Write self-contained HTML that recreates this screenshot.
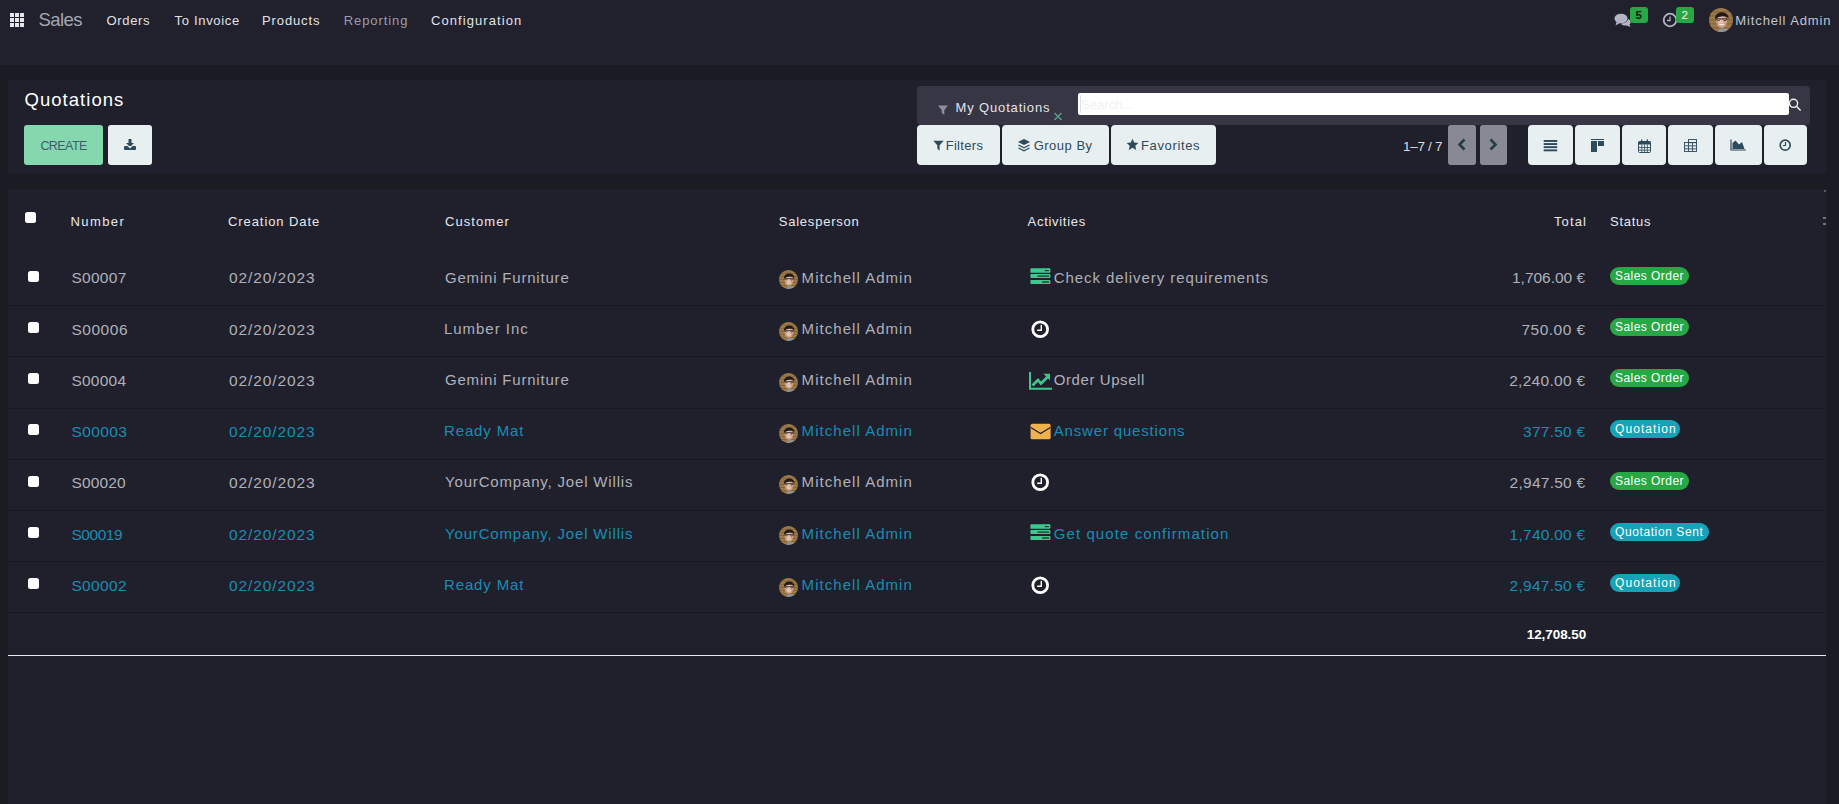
<!DOCTYPE html>
<html><head><meta charset="utf-8"><title>Quotations</title>
<style>
html,body{margin:0;padding:0;}
body{width:1839px;height:804px;overflow:hidden;background:#1b1b24;position:relative;font-family:"Liberation Sans",sans-serif;}
.b{position:absolute;display:block;}
.t{position:absolute;white-space:pre;line-height:normal;font-family:"Liberation Sans",sans-serif;}
</style></head><body>
<div class="b" style="left:0px;top:0px;width:1839px;height:65px;background:#21212d;border-radius:0px;"></div>
<svg class="b" style="left:10px;top:13px" width="14" height="14" viewBox="0 0 14 14"><rect x="0" y="0" width="4" height="4" fill="#e6e6ea"/><rect x="5" y="0" width="4" height="4" fill="#e6e6ea"/><rect x="10" y="0" width="4" height="4" fill="#e6e6ea"/><rect x="0" y="5" width="4" height="4" fill="#e6e6ea"/><rect x="5" y="5" width="4" height="4" fill="#e6e6ea"/><rect x="10" y="5" width="4" height="4" fill="#e6e6ea"/><rect x="0" y="10" width="4" height="4" fill="#e6e6ea"/><rect x="5" y="10" width="4" height="4" fill="#e6e6ea"/><rect x="10" y="10" width="4" height="4" fill="#e6e6ea"/></svg>
<svg class="b" style="left:1614px;top:13px" width="18" height="15" viewBox="0 0 18 15"><ellipse cx="7" cy="5.5" rx="6.5" ry="4.8" fill="#b3b5c3"/><path d="M2.5 9 L1.5 12.5 L6 10 Z" fill="#b3b5c3"/><path d="M14 6 C17 7 17.5 10 15.5 11.5 L16.5 14 L12.5 12.5 C10 12.8 7.5 12 6.5 10.5 C10 10.5 13.5 9 14 6 Z" fill="#b3b5c3"/></svg>
<div class="b" style="left:1630px;top:7px;width:18px;height:16px;background:#28a745;border-radius:3px;"></div>
<span class="t" style="left:1635.5px;top:8.5px;font-size:11.5px;color:#0c160e;font-weight:700">5</span>
<svg class="b" style="left:1662px;top:12px" width="16" height="16" viewBox="0 0 16 16"><circle cx="8" cy="8" r="6.3" fill="none" stroke="#b3b5c3" stroke-width="1.8"/><path d="M8 4.5 V8.5 H5" fill="none" stroke="#b3b5c3" stroke-width="1.3"/></svg>
<div class="b" style="left:1676px;top:7px;width:18px;height:16px;background:#28a745;border-radius:3px;"></div>
<span class="t" style="left:1681.5px;top:8.5px;font-size:11.5px;color:#f4f4e0">2</span>
<svg class="b" style="left:1709px;top:8px" width="24" height="24" viewBox="0 0 24 24"><defs><clipPath id="c1709_8"><circle cx="12" cy="12" r="12"/></clipPath></defs><g clip-path="url(#c1709_8)" transform="scale(1.0)"><rect width="24" height="24" fill="#9d7b49"/><rect x="0" y="3.5" width="24" height="0.8" fill="#5e4526" opacity="0.6"/><rect x="0" y="7.5" width="24" height="0.8" fill="#5e4526" opacity="0.6"/><rect x="0" y="11.5" width="24" height="0.8" fill="#5e4526" opacity="0.6"/><rect x="0" y="15.5" width="24" height="0.8" fill="#5e4526" opacity="0.6"/><rect x="0" y="19.5" width="24" height="0.8" fill="#5e4526" opacity="0.6"/><path d="M8 26 C9 21 12 20.5 15 20.5 C18 20.5 20 21 21 26 Z" fill="#8c969e"/><ellipse cx="12.6" cy="13" rx="5.4" ry="7" fill="#cf9f88"/><ellipse cx="12" cy="11.5" rx="3" ry="4.2" fill="#e8cbbd" opacity="0.75"/><path d="M6.2 11.5 C5 2.5 20 1.5 19.6 11 C18.8 9 16.5 8.2 13 8.4 C9.8 8.6 7.6 9.5 6.2 11.5 Z" fill="#231b18"/><path d="M7.2 10.8 H18.2 M7.5 10.8 C7.8 13 10.5 13 11.6 11 M13.4 11 C14.5 13 17.5 13 17.9 10.8" stroke="#2e2420" stroke-width="0.9" fill="none"/><path d="M10.2 16 Q12.6 17.6 15 16" stroke="#f4f0ee" stroke-width="1.1" fill="none"/></g></svg>
<div class="b" style="left:8px;top:80px;width:1818px;height:93px;background:#20202c;border-radius:0px;"></div>
<div class="b" style="left:24px;top:125px;width:79px;height:40px;background:#85d8ad;border-radius:3px;"></div>
<div class="b" style="left:108px;top:125px;width:44px;height:40px;background:#e8eff1;border-radius:3px;"></div>
<svg class="b" style="left:123px;top:138px" width="14" height="13" viewBox="0 0 14 13"><path d="M5.5 1 H8.5 V5 H11 L7 9 L3 5 H5.5 Z" fill="#2d4b5b"/><rect x="1" y="8" width="12" height="4" rx="1" fill="#2d4b5b"/><path d="M4.5 8 L7 10.5 L9.5 8" fill="#e8eff1"/></svg>
<div class="b" style="left:917px;top:86px;width:893px;height:39px;background:#363644;border-radius:4px;"></div>
<svg class="b" style="left:937px;top:104px" width="12" height="12" viewBox="0 0 12 12"><path d="M1 1.5 H11 L7.3 6 V11 L4.7 8.8 V6 Z" fill="#8e909d"/></svg>
<svg class="b" style="left:1053px;top:112px" width="10" height="9" viewBox="0 0 10 9"><path d="M1.5 1 L8.5 8 M8.5 1 L1.5 8" stroke="#5c9b88" stroke-width="1.5"/></svg>
<div class="b" style="left:1078px;top:93px;width:711px;height:22px;background:#ffffff;border-radius:2px;"></div>
<div class="b" style="left:1080px;top:95px;width:1px;height:18px;background:#d9e2e7;border-radius:0px;"></div>
<svg class="b" style="left:1788px;top:97px" width="14" height="15" viewBox="0 0 14 15"><circle cx="5.5" cy="6.3" r="4.1" fill="none" stroke="#f2f2f4" stroke-width="1.4"/><path d="M8.4 9.3 L12.6 13.5" stroke="#f2f2f4" stroke-width="1.5"/></svg>
<div class="b" style="left:917px;top:125px;width:83px;height:40px;background:#e8eff1;border-radius:4px;"></div>
<div class="b" style="left:1002px;top:125px;width:107px;height:40px;background:#e8eff1;border-radius:4px;"></div>
<div class="b" style="left:1111px;top:125px;width:105px;height:40px;background:#e8eff1;border-radius:4px;"></div>
<svg class="b" style="left:933px;top:140px" width="11" height="11" viewBox="0 0 11 11"><path d="M0.3 0.7 H10.7 L6.6 5.3 V10.8 L4.3 8.5 V5.3 Z" fill="#2d4b5b"/></svg>
<svg class="b" style="left:1017px;top:138px" width="14" height="14" viewBox="0 0 14 14"><path d="M7 1 L13 4 L7 7 L1 4 Z" fill="#2d4b5b"/><path d="M1.5 7 L7 9.8 L12.5 7" fill="none" stroke="#2d4b5b" stroke-width="1.4"/><path d="M1.5 10 L7 12.8 L12.5 10" fill="none" stroke="#2d4b5b" stroke-width="1.4"/></svg>
<svg class="b" style="left:1126px;top:138px" width="13" height="13" viewBox="0 0 13 13"><path d="M6.5 0.8 L8.2 4.6 L12.4 5 L9.3 7.8 L10.2 12 L6.5 9.8 L2.8 12 L3.7 7.8 L0.6 5 L4.8 4.6 Z" fill="#2d4b5b"/></svg>
<div class="b" style="left:1448px;top:125px;width:28px;height:40px;background:#878a94;border-radius:3px;"></div>
<div class="b" style="left:1480px;top:125px;width:27px;height:40px;background:#878a94;border-radius:3px;"></div>
<svg class="b" style="left:1457px;top:138px" width="10" height="14" viewBox="0 0 10 14"><path d="M7.5 1.5 L2.5 6.5 L7.5 11.5" fill="none" stroke="#263b48" stroke-width="2.6"/></svg>
<svg class="b" style="left:1488px;top:138px" width="10" height="14" viewBox="0 0 10 14"><path d="M2.5 1.5 L7.5 6.5 L2.5 11.5" fill="none" stroke="#263b48" stroke-width="2.6"/></svg>
<div class="b" style="left:1528px;top:125px;width:45px;height:40px;background:#e8eff1;border-radius:4px;"></div>
<div class="b" style="left:1575px;top:125px;width:45px;height:40px;background:#e8eff1;border-radius:4px;"></div>
<div class="b" style="left:1622px;top:125px;width:44px;height:40px;background:#e8eff1;border-radius:4px;"></div>
<div class="b" style="left:1668px;top:125px;width:45px;height:40px;background:#e8eff1;border-radius:4px;"></div>
<div class="b" style="left:1715px;top:125px;width:47px;height:40px;background:#e8eff1;border-radius:4px;"></div>
<div class="b" style="left:1764px;top:125px;width:43px;height:40px;background:#e8eff1;border-radius:4px;"></div>
<svg class="b" style="left:1543px;top:139px" width="15" height="14" viewBox="0 0 15 14"><rect x="0.7" y="1" width="13.5" height="1.9" fill="#2d4b5b"/><rect x="0.7" y="4.1" width="13.5" height="1.9" fill="#2d4b5b"/><rect x="0.7" y="7.2" width="13.5" height="1.9" fill="#2d4b5b"/><rect x="0.7" y="10.4" width="13.5" height="1.9" fill="#2d4b5b"/></svg>
<svg class="b" style="left:1590px;top:138px" width="15" height="15" viewBox="0 0 15 15"><rect x="1" y="1" width="13" height="1" fill="#2d4b5b"/><rect x="1" y="3" width="6" height="11" fill="#2d4b5b"/><rect x="8" y="3" width="6" height="5" fill="#2d4b5b"/></svg>
<svg class="b" style="left:1637.5px;top:138.5px" width="13" height="14" viewBox="0 0 13 14"><rect x="0.5" y="2.5" width="12" height="11" rx="1" fill="none" stroke="#2d4b5b" stroke-width="1"/><rect x="0.5" y="2.5" width="12" height="3" fill="#2d4b5b"/><rect x="3" y="0.5" width="1.3" height="3" fill="#2d4b5b"/><rect x="8.7" y="0.5" width="1.3" height="3" fill="#2d4b5b"/><rect x="3.4" y="5.5" width="0.8" height="8" fill="#2d4b5b"/><rect x="6.1" y="5.5" width="0.8" height="8" fill="#2d4b5b"/><rect x="8.9" y="5.5" width="0.8" height="8" fill="#2d4b5b"/><rect x="0.5" y="8" width="12" height="0.8" fill="#2d4b5b"/><rect x="0.5" y="10.7" width="12" height="0.8" fill="#2d4b5b"/></svg>
<svg class="b" style="left:1684px;top:139px" width="13" height="13" viewBox="0 0 13 13"><rect x="0.5" y="3.5" width="12" height="9" fill="none" stroke="#2d4b5b" stroke-width="0.9"/><rect x="4.5" y="0.5" width="8" height="3.2" fill="none" stroke="#2d4b5b" stroke-width="0.9"/><rect x="4.1" y="3.5" width="0.9" height="9" fill="#2d4b5b"/><rect x="8.1" y="3.5" width="0.9" height="9" fill="#2d4b5b"/><rect x="0.5" y="6.4" width="12" height="0.9" fill="#2d4b5b"/><rect x="0.5" y="9.4" width="12" height="0.9" fill="#2d4b5b"/></svg>
<svg class="b" style="left:1730px;top:139px" width="17" height="12" viewBox="0 0 17 12"><path d="M1 0.5 V11 H16" fill="none" stroke="#2d4b5b" stroke-width="1.2"/><path d="M2.5 10 V4 L5.5 1.5 L9 5.5 L12 3 L14.5 10 Z" fill="#2d4b5b"/></svg>
<svg class="b" style="left:1779px;top:139px" width="13" height="13" viewBox="0 0 13 13"><circle cx="6.2" cy="6.2" r="5" fill="none" stroke="#2d4b5b" stroke-width="1.7"/><path d="M6.5 3 V6.5 H4" fill="none" stroke="#2d4b5b" stroke-width="1.2"/></svg>
<div class="b" style="left:8px;top:189px;width:1818px;height:615px;background:#20202c;border-radius:0px;"></div>
<div class="b" style="left:25px;top:212px;width:11px;height:11px;background:#ffffff;border-radius:2.5px;"></div>
<div class="b" style="left:8px;top:305px;width:1818px;height:1px;background:#191921;border-radius:0px;"></div>
<div class="b" style="left:8px;top:356px;width:1818px;height:1px;background:#191921;border-radius:0px;"></div>
<div class="b" style="left:8px;top:408px;width:1818px;height:1px;background:#191921;border-radius:0px;"></div>
<div class="b" style="left:8px;top:459px;width:1818px;height:1px;background:#191921;border-radius:0px;"></div>
<div class="b" style="left:8px;top:510px;width:1818px;height:1px;background:#191921;border-radius:0px;"></div>
<div class="b" style="left:8px;top:561px;width:1818px;height:1px;background:#191921;border-radius:0px;"></div>
<div class="b" style="left:8px;top:612px;width:1818px;height:1px;background:#191921;border-radius:0px;"></div>
<div class="b" style="left:28px;top:271px;width:11px;height:11px;background:#ffffff;border-radius:2.5px;"></div>
<div class="b" style="left:28px;top:322px;width:11px;height:11px;background:#ffffff;border-radius:2.5px;"></div>
<div class="b" style="left:28px;top:373px;width:11px;height:11px;background:#ffffff;border-radius:2.5px;"></div>
<div class="b" style="left:28px;top:424px;width:11px;height:11px;background:#ffffff;border-radius:2.5px;"></div>
<div class="b" style="left:28px;top:476px;width:11px;height:11px;background:#ffffff;border-radius:2.5px;"></div>
<div class="b" style="left:28px;top:527px;width:11px;height:11px;background:#ffffff;border-radius:2.5px;"></div>
<div class="b" style="left:28px;top:578px;width:11px;height:11px;background:#ffffff;border-radius:2.5px;"></div>
<svg class="b" style="left:779px;top:270px" width="19" height="19" viewBox="0 0 19 19"><defs><clipPath id="c779_270"><circle cx="12" cy="12" r="12"/></clipPath></defs><g clip-path="url(#c779_270)" transform="scale(0.7916666666666666)"><rect width="24" height="24" fill="#9d7b49"/><rect x="0" y="3.5" width="24" height="0.8" fill="#5e4526" opacity="0.6"/><rect x="0" y="7.5" width="24" height="0.8" fill="#5e4526" opacity="0.6"/><rect x="0" y="11.5" width="24" height="0.8" fill="#5e4526" opacity="0.6"/><rect x="0" y="15.5" width="24" height="0.8" fill="#5e4526" opacity="0.6"/><rect x="0" y="19.5" width="24" height="0.8" fill="#5e4526" opacity="0.6"/><path d="M8 26 C9 21 12 20.5 15 20.5 C18 20.5 20 21 21 26 Z" fill="#8c969e"/><ellipse cx="12.6" cy="13" rx="5.4" ry="7" fill="#cf9f88"/><ellipse cx="12" cy="11.5" rx="3" ry="4.2" fill="#e8cbbd" opacity="0.75"/><path d="M6.2 11.5 C5 2.5 20 1.5 19.6 11 C18.8 9 16.5 8.2 13 8.4 C9.8 8.6 7.6 9.5 6.2 11.5 Z" fill="#231b18"/><path d="M7.2 10.8 H18.2 M7.5 10.8 C7.8 13 10.5 13 11.6 11 M13.4 11 C14.5 13 17.5 13 17.9 10.8" stroke="#2e2420" stroke-width="0.9" fill="none"/><path d="M10.2 16 Q12.6 17.6 15 16" stroke="#f4f0ee" stroke-width="1.1" fill="none"/></g></svg>
<svg class="b" style="left:1030px;top:268px" width="21" height="17" viewBox="0 0 21 17"><rect x="0.4" y="0.2" width="20" height="4.6" rx="0.8" fill="#3ec88f"/><rect x="0.4" y="6.1" width="20" height="3.9" rx="0.8" fill="#3ec88f"/><rect x="0.4" y="11.9" width="20" height="4.2" rx="0.8" fill="#3ec88f"/><rect x="14.8" y="2" width="4" height="1.2" fill="#1a2a24"/><rect x="7.5" y="7.5" width="11.5" height="1.2" fill="#1a2a24"/><rect x="12" y="13.4" width="7" height="1.2" fill="#1a2a24"/></svg>
<div class="b" style="left:1610px;top:267px;width:79px;height:18px;background:#28a745;border-radius:9px;"></div>
<svg class="b" style="left:779px;top:322px" width="19" height="19" viewBox="0 0 19 19"><defs><clipPath id="c779_322"><circle cx="12" cy="12" r="12"/></clipPath></defs><g clip-path="url(#c779_322)" transform="scale(0.7916666666666666)"><rect width="24" height="24" fill="#9d7b49"/><rect x="0" y="3.5" width="24" height="0.8" fill="#5e4526" opacity="0.6"/><rect x="0" y="7.5" width="24" height="0.8" fill="#5e4526" opacity="0.6"/><rect x="0" y="11.5" width="24" height="0.8" fill="#5e4526" opacity="0.6"/><rect x="0" y="15.5" width="24" height="0.8" fill="#5e4526" opacity="0.6"/><rect x="0" y="19.5" width="24" height="0.8" fill="#5e4526" opacity="0.6"/><path d="M8 26 C9 21 12 20.5 15 20.5 C18 20.5 20 21 21 26 Z" fill="#8c969e"/><ellipse cx="12.6" cy="13" rx="5.4" ry="7" fill="#cf9f88"/><ellipse cx="12" cy="11.5" rx="3" ry="4.2" fill="#e8cbbd" opacity="0.75"/><path d="M6.2 11.5 C5 2.5 20 1.5 19.6 11 C18.8 9 16.5 8.2 13 8.4 C9.8 8.6 7.6 9.5 6.2 11.5 Z" fill="#231b18"/><path d="M7.2 10.8 H18.2 M7.5 10.8 C7.8 13 10.5 13 11.6 11 M13.4 11 C14.5 13 17.5 13 17.9 10.8" stroke="#2e2420" stroke-width="0.9" fill="none"/><path d="M10.2 16 Q12.6 17.6 15 16" stroke="#f4f0ee" stroke-width="1.1" fill="none"/></g></svg>
<svg class="b" style="left:1031px;top:320px" width="19" height="19" viewBox="0 0 19 19"><circle cx="9.2" cy="9.2" r="7.4" fill="none" stroke="#ffffff" stroke-width="2.8"/><path d="M10.3 4.8 V10.3 H6.2" fill="none" stroke="#ffffff" stroke-width="1.4"/></svg>
<div class="b" style="left:1610px;top:318px;width:79px;height:18px;background:#28a745;border-radius:9px;"></div>
<svg class="b" style="left:779px;top:373px" width="19" height="19" viewBox="0 0 19 19"><defs><clipPath id="c779_373"><circle cx="12" cy="12" r="12"/></clipPath></defs><g clip-path="url(#c779_373)" transform="scale(0.7916666666666666)"><rect width="24" height="24" fill="#9d7b49"/><rect x="0" y="3.5" width="24" height="0.8" fill="#5e4526" opacity="0.6"/><rect x="0" y="7.5" width="24" height="0.8" fill="#5e4526" opacity="0.6"/><rect x="0" y="11.5" width="24" height="0.8" fill="#5e4526" opacity="0.6"/><rect x="0" y="15.5" width="24" height="0.8" fill="#5e4526" opacity="0.6"/><rect x="0" y="19.5" width="24" height="0.8" fill="#5e4526" opacity="0.6"/><path d="M8 26 C9 21 12 20.5 15 20.5 C18 20.5 20 21 21 26 Z" fill="#8c969e"/><ellipse cx="12.6" cy="13" rx="5.4" ry="7" fill="#cf9f88"/><ellipse cx="12" cy="11.5" rx="3" ry="4.2" fill="#e8cbbd" opacity="0.75"/><path d="M6.2 11.5 C5 2.5 20 1.5 19.6 11 C18.8 9 16.5 8.2 13 8.4 C9.8 8.6 7.6 9.5 6.2 11.5 Z" fill="#231b18"/><path d="M7.2 10.8 H18.2 M7.5 10.8 C7.8 13 10.5 13 11.6 11 M13.4 11 C14.5 13 17.5 13 17.9 10.8" stroke="#2e2420" stroke-width="0.9" fill="none"/><path d="M10.2 16 Q12.6 17.6 15 16" stroke="#f4f0ee" stroke-width="1.1" fill="none"/></g></svg>
<svg class="b" style="left:1028px;top:371px" width="25" height="19" viewBox="0 0 25 19"><path d="M2 1 V17.7 H24" fill="none" stroke="#3ec88f" stroke-width="2"/><path d="M4.5 14.5 L10 9 L13 12.5 L19.5 6" fill="none" stroke="#3ec88f" stroke-width="2.6"/><path d="M15.5 2.8 H22 V9.3 Z" fill="#3ec88f"/></svg>
<div class="b" style="left:1610px;top:369px;width:79px;height:18px;background:#28a745;border-radius:9px;"></div>
<svg class="b" style="left:779px;top:424px" width="19" height="19" viewBox="0 0 19 19"><defs><clipPath id="c779_424"><circle cx="12" cy="12" r="12"/></clipPath></defs><g clip-path="url(#c779_424)" transform="scale(0.7916666666666666)"><rect width="24" height="24" fill="#9d7b49"/><rect x="0" y="3.5" width="24" height="0.8" fill="#5e4526" opacity="0.6"/><rect x="0" y="7.5" width="24" height="0.8" fill="#5e4526" opacity="0.6"/><rect x="0" y="11.5" width="24" height="0.8" fill="#5e4526" opacity="0.6"/><rect x="0" y="15.5" width="24" height="0.8" fill="#5e4526" opacity="0.6"/><rect x="0" y="19.5" width="24" height="0.8" fill="#5e4526" opacity="0.6"/><path d="M8 26 C9 21 12 20.5 15 20.5 C18 20.5 20 21 21 26 Z" fill="#8c969e"/><ellipse cx="12.6" cy="13" rx="5.4" ry="7" fill="#cf9f88"/><ellipse cx="12" cy="11.5" rx="3" ry="4.2" fill="#e8cbbd" opacity="0.75"/><path d="M6.2 11.5 C5 2.5 20 1.5 19.6 11 C18.8 9 16.5 8.2 13 8.4 C9.8 8.6 7.6 9.5 6.2 11.5 Z" fill="#231b18"/><path d="M7.2 10.8 H18.2 M7.5 10.8 C7.8 13 10.5 13 11.6 11 M13.4 11 C14.5 13 17.5 13 17.9 10.8" stroke="#2e2420" stroke-width="0.9" fill="none"/><path d="M10.2 16 Q12.6 17.6 15 16" stroke="#f4f0ee" stroke-width="1.1" fill="none"/></g></svg>
<svg class="b" style="left:1030px;top:423px" width="21" height="17" viewBox="0 0 21 17"><rect x="0.6" y="0.8" width="20" height="15.5" rx="1.6" fill="#f0b04c"/><path d="M0.8 4.5 L10.5 10.5 L20.3 4.5" fill="none" stroke="#20202c" stroke-width="1.3"/></svg>
<div class="b" style="left:1610px;top:420px;width:70px;height:18px;background:#17a2b8;border-radius:9px;"></div>
<svg class="b" style="left:779px;top:475px" width="19" height="19" viewBox="0 0 19 19"><defs><clipPath id="c779_475"><circle cx="12" cy="12" r="12"/></clipPath></defs><g clip-path="url(#c779_475)" transform="scale(0.7916666666666666)"><rect width="24" height="24" fill="#9d7b49"/><rect x="0" y="3.5" width="24" height="0.8" fill="#5e4526" opacity="0.6"/><rect x="0" y="7.5" width="24" height="0.8" fill="#5e4526" opacity="0.6"/><rect x="0" y="11.5" width="24" height="0.8" fill="#5e4526" opacity="0.6"/><rect x="0" y="15.5" width="24" height="0.8" fill="#5e4526" opacity="0.6"/><rect x="0" y="19.5" width="24" height="0.8" fill="#5e4526" opacity="0.6"/><path d="M8 26 C9 21 12 20.5 15 20.5 C18 20.5 20 21 21 26 Z" fill="#8c969e"/><ellipse cx="12.6" cy="13" rx="5.4" ry="7" fill="#cf9f88"/><ellipse cx="12" cy="11.5" rx="3" ry="4.2" fill="#e8cbbd" opacity="0.75"/><path d="M6.2 11.5 C5 2.5 20 1.5 19.6 11 C18.8 9 16.5 8.2 13 8.4 C9.8 8.6 7.6 9.5 6.2 11.5 Z" fill="#231b18"/><path d="M7.2 10.8 H18.2 M7.5 10.8 C7.8 13 10.5 13 11.6 11 M13.4 11 C14.5 13 17.5 13 17.9 10.8" stroke="#2e2420" stroke-width="0.9" fill="none"/><path d="M10.2 16 Q12.6 17.6 15 16" stroke="#f4f0ee" stroke-width="1.1" fill="none"/></g></svg>
<svg class="b" style="left:1031px;top:473px" width="19" height="19" viewBox="0 0 19 19"><circle cx="9.2" cy="9.2" r="7.4" fill="none" stroke="#ffffff" stroke-width="2.8"/><path d="M10.3 4.8 V10.3 H6.2" fill="none" stroke="#ffffff" stroke-width="1.4"/></svg>
<div class="b" style="left:1610px;top:472px;width:79px;height:18px;background:#28a745;border-radius:9px;"></div>
<svg class="b" style="left:779px;top:526px" width="19" height="19" viewBox="0 0 19 19"><defs><clipPath id="c779_526"><circle cx="12" cy="12" r="12"/></clipPath></defs><g clip-path="url(#c779_526)" transform="scale(0.7916666666666666)"><rect width="24" height="24" fill="#9d7b49"/><rect x="0" y="3.5" width="24" height="0.8" fill="#5e4526" opacity="0.6"/><rect x="0" y="7.5" width="24" height="0.8" fill="#5e4526" opacity="0.6"/><rect x="0" y="11.5" width="24" height="0.8" fill="#5e4526" opacity="0.6"/><rect x="0" y="15.5" width="24" height="0.8" fill="#5e4526" opacity="0.6"/><rect x="0" y="19.5" width="24" height="0.8" fill="#5e4526" opacity="0.6"/><path d="M8 26 C9 21 12 20.5 15 20.5 C18 20.5 20 21 21 26 Z" fill="#8c969e"/><ellipse cx="12.6" cy="13" rx="5.4" ry="7" fill="#cf9f88"/><ellipse cx="12" cy="11.5" rx="3" ry="4.2" fill="#e8cbbd" opacity="0.75"/><path d="M6.2 11.5 C5 2.5 20 1.5 19.6 11 C18.8 9 16.5 8.2 13 8.4 C9.8 8.6 7.6 9.5 6.2 11.5 Z" fill="#231b18"/><path d="M7.2 10.8 H18.2 M7.5 10.8 C7.8 13 10.5 13 11.6 11 M13.4 11 C14.5 13 17.5 13 17.9 10.8" stroke="#2e2420" stroke-width="0.9" fill="none"/><path d="M10.2 16 Q12.6 17.6 15 16" stroke="#f4f0ee" stroke-width="1.1" fill="none"/></g></svg>
<svg class="b" style="left:1030px;top:524px" width="21" height="17" viewBox="0 0 21 17"><rect x="0.4" y="0.2" width="20" height="4.6" rx="0.8" fill="#3ec88f"/><rect x="0.4" y="6.1" width="20" height="3.9" rx="0.8" fill="#3ec88f"/><rect x="0.4" y="11.9" width="20" height="4.2" rx="0.8" fill="#3ec88f"/><rect x="14.8" y="2" width="4" height="1.2" fill="#1a2a24"/><rect x="7.5" y="7.5" width="11.5" height="1.2" fill="#1a2a24"/><rect x="12" y="13.4" width="7" height="1.2" fill="#1a2a24"/></svg>
<div class="b" style="left:1610px;top:523px;width:99px;height:18px;background:#17a2b8;border-radius:9px;"></div>
<svg class="b" style="left:779px;top:578px" width="19" height="19" viewBox="0 0 19 19"><defs><clipPath id="c779_578"><circle cx="12" cy="12" r="12"/></clipPath></defs><g clip-path="url(#c779_578)" transform="scale(0.7916666666666666)"><rect width="24" height="24" fill="#9d7b49"/><rect x="0" y="3.5" width="24" height="0.8" fill="#5e4526" opacity="0.6"/><rect x="0" y="7.5" width="24" height="0.8" fill="#5e4526" opacity="0.6"/><rect x="0" y="11.5" width="24" height="0.8" fill="#5e4526" opacity="0.6"/><rect x="0" y="15.5" width="24" height="0.8" fill="#5e4526" opacity="0.6"/><rect x="0" y="19.5" width="24" height="0.8" fill="#5e4526" opacity="0.6"/><path d="M8 26 C9 21 12 20.5 15 20.5 C18 20.5 20 21 21 26 Z" fill="#8c969e"/><ellipse cx="12.6" cy="13" rx="5.4" ry="7" fill="#cf9f88"/><ellipse cx="12" cy="11.5" rx="3" ry="4.2" fill="#e8cbbd" opacity="0.75"/><path d="M6.2 11.5 C5 2.5 20 1.5 19.6 11 C18.8 9 16.5 8.2 13 8.4 C9.8 8.6 7.6 9.5 6.2 11.5 Z" fill="#231b18"/><path d="M7.2 10.8 H18.2 M7.5 10.8 C7.8 13 10.5 13 11.6 11 M13.4 11 C14.5 13 17.5 13 17.9 10.8" stroke="#2e2420" stroke-width="0.9" fill="none"/><path d="M10.2 16 Q12.6 17.6 15 16" stroke="#f4f0ee" stroke-width="1.1" fill="none"/></g></svg>
<svg class="b" style="left:1031px;top:576px" width="19" height="19" viewBox="0 0 19 19"><circle cx="9.2" cy="9.2" r="7.4" fill="none" stroke="#ffffff" stroke-width="2.8"/><path d="M10.3 4.8 V10.3 H6.2" fill="none" stroke="#ffffff" stroke-width="1.4"/></svg>
<div class="b" style="left:1610px;top:574px;width:70px;height:18px;background:#17a2b8;border-radius:9px;"></div>
<span class="t" style="left:1615.00px;top:268.64px;font-size:12px;color:#ffffff;letter-spacing:0.447px">Sales Order</span>
<span class="t" style="left:1615.00px;top:319.64px;font-size:12px;color:#ffffff;letter-spacing:0.447px">Sales Order</span>
<span class="t" style="left:1615.00px;top:370.64px;font-size:12px;color:#ffffff;letter-spacing:0.447px">Sales Order</span>
<span class="t" style="left:1615.00px;top:421.64px;font-size:12px;color:#ffffff;letter-spacing:1.080px">Quotation</span>
<span class="t" style="left:1615.00px;top:473.64px;font-size:12px;color:#ffffff;letter-spacing:0.447px">Sales Order</span>
<span class="t" style="left:1615.00px;top:524.64px;font-size:12px;color:#ffffff;letter-spacing:0.598px">Quotation Sent</span>
<span class="t" style="left:1615.00px;top:575.64px;font-size:12px;color:#ffffff;letter-spacing:1.080px">Quotation</span>
<div class="b" style="left:1823px;top:217px;width:3px;height:1.5px;background:#6f717c;border-radius:0px;"></div>
<div class="b" style="left:1823px;top:222.5px;width:3px;height:2px;background:#6f717c;border-radius:0px;"></div>
<div class="b" style="left:1824px;top:190px;width:2px;height:2px;background:#5a5c66;border-radius:0px;"></div>
<div class="b" style="left:8px;top:655px;width:1818px;height:1px;background:#e9e9ee;border-radius:0px;"></div>
<span class="t" style="left:38.40px;top:8.95px;font-size:18.5px;color:#a3a6b3;letter-spacing:-0.557px">Sales</span>
<span class="t" style="left:106.50px;top:13.02px;font-size:13px;color:#e2e2e6;letter-spacing:0.654px">Orders</span>
<span class="t" style="left:174.60px;top:13.02px;font-size:13px;color:#e2e2e6;letter-spacing:0.678px">To Invoice</span>
<span class="t" style="left:262.00px;top:13.02px;font-size:13px;color:#e2e2e6;letter-spacing:0.885px">Products</span>
<span class="t" style="left:343.70px;top:13.02px;font-size:13px;color:#9a9dab;letter-spacing:0.920px">Reporting</span>
<span class="t" style="left:431.00px;top:13.02px;font-size:13px;color:#e2e2e6;letter-spacing:1.075px">Configuration</span>
<span class="t" style="left:1735.30px;top:13.02px;font-size:13px;color:#c2c4ce;letter-spacing:0.877px">Mitchell Admin</span>
<span class="t" style="left:24.60px;top:88.95px;font-size:18.5px;color:#ffffff;letter-spacing:1.020px">Quotations</span>
<span class="t" style="left:40.40px;top:139.28px;font-size:12.5px;color:#3c5d6b;letter-spacing:-0.567px">CREATE</span>
<span class="t" style="left:955.60px;top:100.02px;font-size:13px;color:#e4e4e8;letter-spacing:0.840px">My Quotations</span>
<span class="t" style="left:1081.00px;top:97.02px;font-size:13px;color:#eff1f4;letter-spacing:0.073px">Search...</span>
<span class="t" style="left:945.70px;top:138.02px;font-size:13px;color:#2d4b5b;letter-spacing:0.302px">Filters</span>
<span class="t" style="left:1033.70px;top:138.02px;font-size:13px;color:#2d4b5b;letter-spacing:0.498px">Group By</span>
<span class="t" style="left:1141.00px;top:138.02px;font-size:13px;color:#2d4b5b;letter-spacing:0.630px">Favorites</span>
<span class="t" style="left:1403.00px;top:139.06px;font-size:13.5px;color:#dcdce2;letter-spacing:-0.296px">1–7 / 7</span>
<span class="t" style="left:70.40px;top:214.02px;font-size:13px;color:#e8e8ec;letter-spacing:1.439px">Number</span>
<span class="t" style="left:228.00px;top:214.02px;font-size:13px;color:#e8e8ec;letter-spacing:0.918px">Creation Date</span>
<span class="t" style="left:445.00px;top:214.02px;font-size:13px;color:#e8e8ec;letter-spacing:1.069px">Customer</span>
<span class="t" style="left:778.70px;top:214.02px;font-size:13px;color:#e8e8ec;letter-spacing:0.786px">Salesperson</span>
<span class="t" style="left:1027.60px;top:214.02px;font-size:13px;color:#e8e8ec;letter-spacing:0.701px">Activities</span>
<span class="t" style="left:1554.00px;top:214.02px;font-size:13px;color:#e8e8ec;letter-spacing:1.107px">Total</span>
<span class="t" style="left:1610.00px;top:214.02px;font-size:13px;color:#e8e8ec;letter-spacing:0.729px">Status</span>
<span class="t" style="left:71.40px;top:269.22px;font-size:15.5px;color:#aeb0ba;letter-spacing:0.296px">S00007</span>
<span class="t" style="left:229.00px;top:269.22px;font-size:15.5px;color:#aeb0ba;letter-spacing:0.894px">02/20/2023</span>
<span class="t" style="left:445.00px;top:268.88px;font-size:15px;color:#aeb0ba;letter-spacing:0.803px">Gemini Furniture</span>
<span class="t" style="left:801.60px;top:268.88px;font-size:15px;color:#aeb0ba;letter-spacing:1.039px">Mitchell Admin</span>
<span class="t" style="left:1053.70px;top:268.88px;font-size:15px;color:#aeb0ba;letter-spacing:0.932px">Check delivery requirements</span>
<span class="t" style="left:1512.00px;top:269.22px;font-size:15.5px;color:#aeb0ba;letter-spacing:-0.016px">1,706.00 €</span>
<span class="t" style="left:71.40px;top:320.72px;font-size:15.5px;color:#aeb0ba;letter-spacing:0.536px">S00006</span>
<span class="t" style="left:229.00px;top:320.72px;font-size:15.5px;color:#aeb0ba;letter-spacing:0.894px">02/20/2023</span>
<span class="t" style="left:444.00px;top:320.38px;font-size:15px;color:#aeb0ba;letter-spacing:0.963px">Lumber Inc</span>
<span class="t" style="left:801.60px;top:320.38px;font-size:15px;color:#aeb0ba;letter-spacing:1.039px">Mitchell Admin</span>
<span class="t" style="left:1521.50px;top:320.72px;font-size:15.5px;color:#aeb0ba;letter-spacing:0.469px">750.00 €</span>
<span class="t" style="left:71.40px;top:371.72px;font-size:15.5px;color:#aeb0ba;letter-spacing:0.256px">S00004</span>
<span class="t" style="left:229.00px;top:371.72px;font-size:15.5px;color:#aeb0ba;letter-spacing:0.894px">02/20/2023</span>
<span class="t" style="left:445.00px;top:371.38px;font-size:15px;color:#aeb0ba;letter-spacing:0.803px">Gemini Furniture</span>
<span class="t" style="left:801.60px;top:371.38px;font-size:15px;color:#aeb0ba;letter-spacing:1.039px">Mitchell Admin</span>
<span class="t" style="left:1053.70px;top:371.38px;font-size:15px;color:#aeb0ba;letter-spacing:0.586px">Order Upsell</span>
<span class="t" style="left:1509.20px;top:371.72px;font-size:15.5px;color:#aeb0ba;letter-spacing:0.295px">2,240.00 €</span>
<span class="t" style="left:71.40px;top:422.72px;font-size:15.5px;color:#188db3;letter-spacing:0.396px">S00003</span>
<span class="t" style="left:229.00px;top:422.72px;font-size:15.5px;color:#188db3;letter-spacing:0.894px">02/20/2023</span>
<span class="t" style="left:444.00px;top:422.38px;font-size:15px;color:#188db3;letter-spacing:0.867px">Ready Mat</span>
<span class="t" style="left:801.60px;top:422.38px;font-size:15px;color:#188db3;letter-spacing:1.039px">Mitchell Admin</span>
<span class="t" style="left:1053.70px;top:422.38px;font-size:15px;color:#188db3;letter-spacing:0.834px">Answer questions</span>
<span class="t" style="left:1523.04px;top:422.72px;font-size:15.5px;color:#188db3;letter-spacing:0.250px">377.50 €</span>
<span class="t" style="left:71.40px;top:473.72px;font-size:15.5px;color:#aeb0ba;letter-spacing:0.156px">S00020</span>
<span class="t" style="left:229.00px;top:473.72px;font-size:15.5px;color:#aeb0ba;letter-spacing:0.894px">02/20/2023</span>
<span class="t" style="left:445.00px;top:473.38px;font-size:15px;color:#aeb0ba;letter-spacing:0.831px">YourCompany, Joel Willis</span>
<span class="t" style="left:801.60px;top:473.38px;font-size:15px;color:#aeb0ba;letter-spacing:1.039px">Mitchell Admin</span>
<span class="t" style="left:1509.61px;top:473.72px;font-size:15.5px;color:#aeb0ba;letter-spacing:0.250px">2,947.50 €</span>
<span class="t" style="left:71.40px;top:525.72px;font-size:15.5px;color:#188db3;letter-spacing:-0.444px">S00019</span>
<span class="t" style="left:229.00px;top:525.72px;font-size:15.5px;color:#188db3;letter-spacing:0.894px">02/20/2023</span>
<span class="t" style="left:445.00px;top:525.38px;font-size:15px;color:#188db3;letter-spacing:0.831px">YourCompany, Joel Willis</span>
<span class="t" style="left:801.60px;top:525.38px;font-size:15px;color:#188db3;letter-spacing:1.039px">Mitchell Admin</span>
<span class="t" style="left:1053.70px;top:525.38px;font-size:15px;color:#188db3;letter-spacing:1.090px">Get quote confirmation</span>
<span class="t" style="left:1509.61px;top:525.72px;font-size:15.5px;color:#188db3;letter-spacing:0.250px">1,740.00 €</span>
<span class="t" style="left:71.40px;top:576.72px;font-size:15.5px;color:#188db3;letter-spacing:0.356px">S00002</span>
<span class="t" style="left:229.00px;top:576.72px;font-size:15.5px;color:#188db3;letter-spacing:0.894px">02/20/2023</span>
<span class="t" style="left:444.00px;top:576.38px;font-size:15px;color:#188db3;letter-spacing:0.867px">Ready Mat</span>
<span class="t" style="left:801.60px;top:576.38px;font-size:15px;color:#188db3;letter-spacing:1.039px">Mitchell Admin</span>
<span class="t" style="left:1509.61px;top:576.72px;font-size:15.5px;color:#188db3;letter-spacing:0.250px">2,947.50 €</span>
<span class="t" style="left:1526.70px;top:626.86px;font-size:13.5px;color:#ffffff;letter-spacing:-0.069px;font-weight:700">12,708.50</span>
</body></html>
